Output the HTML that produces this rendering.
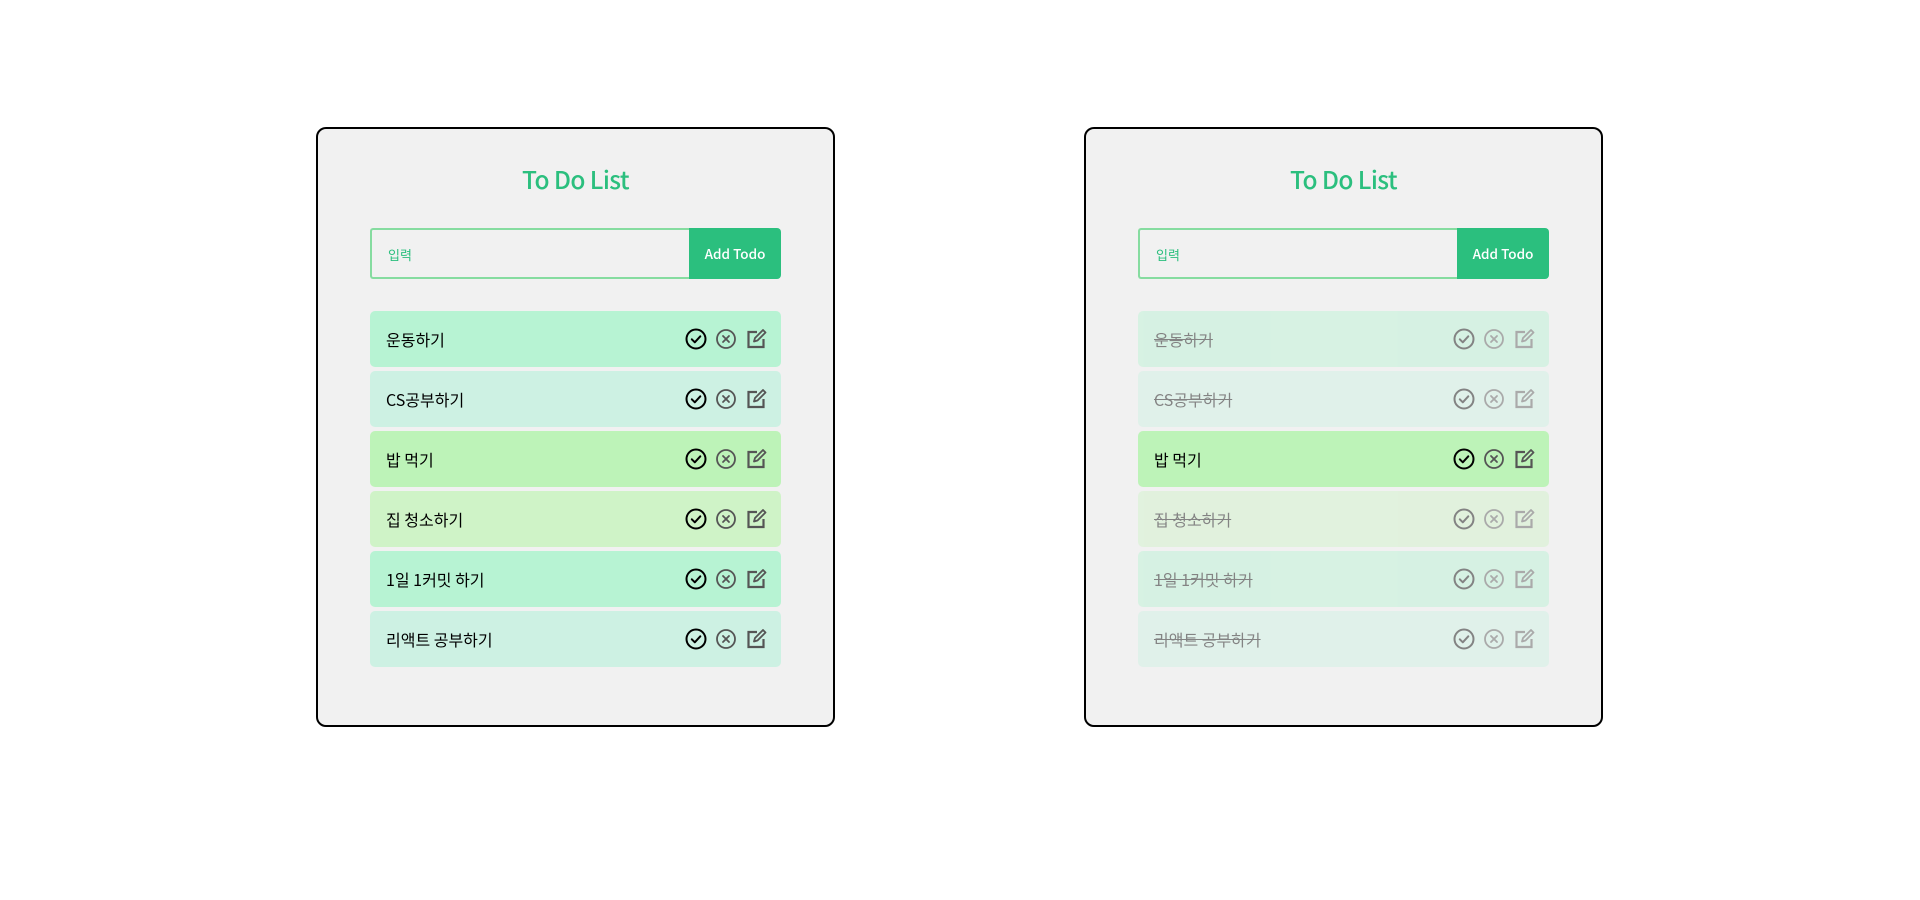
<!DOCTYPE html>
<html><head><meta charset="utf-8"><style>
*{box-sizing:border-box;margin:0;padding:0}
body{width:1920px;height:900px;background:#fff;font-family:"Liberation Sans","Noto Sans CJK KR",sans-serif;position:relative;overflow:hidden}
.card{position:absolute;top:127px;width:519px;height:600px;background:#f1f1f1;border:2px solid #000;border-radius:10px}
h1{position:absolute;top:33px;left:0;width:100%;text-align:center;color:#2bbf7e;font-size:24.5px;font-weight:500;font-family:"Noto Sans CJK KR",sans-serif;letter-spacing:-0.6px}
.inp{position:absolute;left:52px;top:99px;width:320px;height:51px;border:2px solid #86dca0;border-right:none;border-radius:3px 0 0 3px;color:#2bbf7e;font-size:13px;padding:15px 16px;font-family:"Noto Sans CJK KR",sans-serif}
.btn{position:absolute;left:371px;top:99px;width:92px;height:51px;background:#2bbf7e;color:#fff;border-radius:0 4px 4px 0;font-size:13.5px;font-weight:500;text-align:center;line-height:51px;font-family:"Noto Sans CJK KR",sans-serif}
.list{position:absolute;left:52px;top:182px;width:411px}
.item{height:56px;margin-bottom:4px;border-radius:5px;position:relative;font-size:16px;line-height:56px;padding-left:16px;font-family:"Noto Sans CJK KR",sans-serif;color:#000}
.item.done{opacity:.45}
.item.done span{text-decoration:line-through}
.icons{position:absolute;right:14px;top:17px;height:22px;display:flex;gap:8px}
.icons svg{width:22px;height:22px;display:block}
</style></head><body>
<svg width="0" height="0" style="position:absolute">
<symbol id="ck" viewBox="0 0 22 22"><circle cx="11" cy="11" r="9.5" fill="none" stroke="#000" stroke-width="2"/><path d="M6.8 11.3l3 3 5.5-6" fill="none" stroke="#000" stroke-width="2" stroke-linecap="round" stroke-linejoin="round"/></symbol>
<symbol id="xx" viewBox="0 0 22 22"><circle cx="11" cy="11" r="9" fill="none" stroke="#555" stroke-width="1.8"/><path d="M8 8l6 6M14 8l-6 6" stroke="#555" stroke-width="1.8" stroke-linecap="round"/></symbol>
<symbol id="ed" viewBox="0 0 22 22"><path d="M12 4H3.5v15h15v-8" fill="none" stroke="#555" stroke-width="2.2"/><path d="M9 13.5l1-3.5 8-8 2.5 2.5-8 8z" fill="none" stroke="#555" stroke-width="1.8" stroke-linejoin="round"/></symbol>
</svg>

<div class="card" style="left:316px">
<h1>To Do List</h1>
<div class="inp">입력</div><div class="btn">Add Todo</div>
<div class="list">
<div class="item" style="background:#b7f3d3"><span>운동하기</span><div class="icons"><svg><use href="#ck"/></svg><svg><use href="#xx"/></svg><svg><use href="#ed"/></svg></div></div>
<div class="item" style="background:#cdf1e3"><span>CS공부하기</span><div class="icons"><svg><use href="#ck"/></svg><svg><use href="#xx"/></svg><svg><use href="#ed"/></svg></div></div>
<div class="item" style="background:#bdf3b8"><span>밥 먹기</span><div class="icons"><svg><use href="#ck"/></svg><svg><use href="#xx"/></svg><svg><use href="#ed"/></svg></div></div>
<div class="item" style="background:#cff3c7"><span>집 청소하기</span><div class="icons"><svg><use href="#ck"/></svg><svg><use href="#xx"/></svg><svg><use href="#ed"/></svg></div></div>
<div class="item" style="background:#b7f3d3"><span>1일 1커밋 하기</span><div class="icons"><svg><use href="#ck"/></svg><svg><use href="#xx"/></svg><svg><use href="#ed"/></svg></div></div>
<div class="item" style="background:#cdf1e3"><span>리액트 공부하기</span><div class="icons"><svg><use href="#ck"/></svg><svg><use href="#xx"/></svg><svg><use href="#ed"/></svg></div></div>
</div></div>

<div class="card" style="left:1084px">
<h1>To Do List</h1>
<div class="inp">입력</div><div class="btn">Add Todo</div>
<div class="list">
<div class="item done" style="background:#b7f3d3"><span>운동하기</span><div class="icons"><svg><use href="#ck"/></svg><svg><use href="#xx"/></svg><svg><use href="#ed"/></svg></div></div>
<div class="item done" style="background:#cdf1e3"><span>CS공부하기</span><div class="icons"><svg><use href="#ck"/></svg><svg><use href="#xx"/></svg><svg><use href="#ed"/></svg></div></div>
<div class="item" style="background:#bdf3b8"><span>밥 먹기</span><div class="icons"><svg><use href="#ck"/></svg><svg><use href="#xx"/></svg><svg><use href="#ed"/></svg></div></div>
<div class="item done" style="background:#cff3c7"><span>집 청소하기</span><div class="icons"><svg><use href="#ck"/></svg><svg><use href="#xx"/></svg><svg><use href="#ed"/></svg></div></div>
<div class="item done" style="background:#b7f3d3"><span>1일 1커밋 하기</span><div class="icons"><svg><use href="#ck"/></svg><svg><use href="#xx"/></svg><svg><use href="#ed"/></svg></div></div>
<div class="item done" style="background:#cdf1e3"><span>리액트 공부하기</span><div class="icons"><svg><use href="#ck"/></svg><svg><use href="#xx"/></svg><svg><use href="#ed"/></svg></div></div>
</div></div>
</body></html>
